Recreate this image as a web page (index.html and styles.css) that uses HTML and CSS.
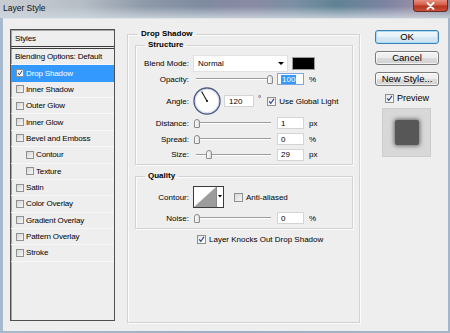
FILE: index.html
```html
<!DOCTYPE html>
<html>
<head>
<meta charset="utf-8">
<title>Layer Style</title>
<link rel="stylesheet" href="styles.css">
</head>
<body>
<div class="window">
  <div class="titlebar">
    <span class="title">Layer Style</span>
    <div class="close"><svg width="11" height="8" viewBox="0 0 11 8"><path d="M2.5 1 L8.5 7 M8.5 1 L2.5 7" stroke="#fff" stroke-width="1.8" stroke-linecap="round"/></svg></div>
  </div>
  <div class="client">
    <div class="styles-list">
      <div class="list-head">Styles</div>
      <div class="item">Blending Options: Default</div>
      <div class="item selected"><span class="cb small checked"><svg viewBox="0 0 8 8"><path d="M1.5 4 L3.3 6.3 L6.8 1" fill="none" stroke="#1f3a8a" stroke-width="1.3"/></svg></span>Drop Shadow</div>
      <div class="item"><span class="cb small"></span>Inner Shadow</div>
      <div class="item"><span class="cb small"></span>Outer Glow</div>
      <div class="item"><span class="cb small"></span>Inner Glow</div>
      <div class="item"><span class="cb small"></span>Bevel and Emboss</div>
      <div class="item sub"><span class="cb small"></span>Contour</div>
      <div class="item sub"><span class="cb small"></span>Texture</div>
      <div class="item"><span class="cb small"></span>Satin</div>
      <div class="item"><span class="cb small"></span>Color Overlay</div>
      <div class="item"><span class="cb small"></span>Gradient Overlay</div>
      <div class="item"><span class="cb small"></span>Pattern Overlay</div>
      <div class="item"><span class="cb small"></span>Stroke</div>
    </div>

    <fieldset class="group main">
      <legend>Drop Shadow</legend>
      <fieldset class="group sub-group structure">
        <legend>Structure</legend>
        <div class="row r-blend">
          <span class="lbl">Blend Mode:</span>
          <div class="select"><span>Normal</span><i class="caret"></i></div>
          <span class="swatch"></span>
        </div>
        <div class="row r-opacity">
          <span class="lbl">Opacity:</span>
          <div class="slider"><span class="thumb" style="margin-left:74px"></span></div>
          <span class="num focus"><span class="hl">100</span></span>
          <span class="unit">%</span>
        </div>
        <div class="row r-angle">
          <span class="lbl">Angle:</span>
          <svg class="dial" width="28" height="28" viewBox="0 0 28 28">
            <circle cx="14" cy="14" r="13" fill="#fff" stroke="#4a5b82" stroke-width="1.4"/>
            <circle cx="14" cy="14" r="11.8" fill="none" stroke="#c9d0de" stroke-width="0.8"/>
            <path d="M14 14 L8.6 4.6" stroke="#111" stroke-width="1.1"/>
            <circle cx="14" cy="14" r="1.1" fill="#111"/>
          </svg>
          <span class="num wide">120</span>
          <span class="deg">°</span>
          <span class="cb checked"><svg viewBox="0 0 9 9"><path d="M1.6 4.4 L3.6 7 L7.6 1.2" fill="none" stroke="#1f3a8a" stroke-width="1.4"/></svg></span>
          <span class="cb-text">Use Global Light</span>
        </div>
        <div class="row r-dist">
          <span class="lbl">Distance:</span>
          <div class="slider"><span class="thumb" style="margin-left:1px"></span></div>
          <span class="num">1</span>
          <span class="unit">px</span>
        </div>
        <div class="row r-spread">
          <span class="lbl">Spread:</span>
          <div class="slider"><span class="thumb" style="margin-left:1px"></span></div>
          <span class="num">0</span>
          <span class="unit">%</span>
        </div>
        <div class="row r-size">
          <span class="lbl">Size:</span>
          <div class="slider"><span class="thumb" style="margin-left:13px"></span></div>
          <span class="num">29</span>
          <span class="unit">px</span>
        </div>
      </fieldset>

      <fieldset class="group sub-group quality">
        <legend>Quality</legend>
        <div class="row r-contour">
          <span class="lbl">Contour:</span>
          <svg class="contour" width="31" height="22" viewBox="0 0 31 22">
            <rect x="0.5" y="0.5" width="30" height="21" fill="#fff" stroke="#3a3a3a"/>
            <polygon points="1,21 23,1 23,21" fill="#9c9c9c"/>
            <path d="M23.5 1 V21" stroke="#8a8a8a"/>
            <polygon points="25,9 29,9 27,11.5" fill="#000"/>
          </svg>
          <span class="cb aa"></span>
          <span class="cb-text">Anti-aliased</span>
        </div>
        <div class="row r-noise">
          <span class="lbl">Noise:</span>
          <div class="slider"><span class="thumb" style="margin-left:1px"></span></div>
          <span class="num">0</span>
          <span class="unit">%</span>
        </div>
      </fieldset>

      <div class="row r-knock">
        <span class="cb checked"><svg viewBox="0 0 9 9"><path d="M1.6 4.4 L3.6 7 L7.6 1.2" fill="none" stroke="#1f3a8a" stroke-width="1.4"/></svg></span>
        <span class="cb-text">Layer Knocks Out Drop Shadow</span>
      </div>
    </fieldset>

    <div class="side">
      <div class="btn default">OK</div>
      <div class="btn">Cancel</div>
      <div class="btn">New Style...</div>
      <div class="preview-row">
        <span class="cb checked"><svg viewBox="0 0 9 9"><path d="M1.6 4.4 L3.6 7 L7.6 1.2" fill="none" stroke="#1f3a8a" stroke-width="1.4"/></svg></span>
        <span class="preview-text">Preview</span>
      </div>
      <div class="preview-box"><div class="preview-square"></div></div>
    </div>
  </div>
</div>
</body>
</html>
```

FILE: styles.css
```css
* { box-sizing: border-box; }
html, body { margin: 0; padding: 0; }
body {
  width: 450px;
  height: 333px;
  overflow: hidden;
  font-family: "Liberation Sans", Arial, sans-serif;
  font-size: 8px;
  color: #000;
  background: #9fb3c7;
}
.window {
  width: 450px;
  height: 333px;
  display: flex;
  flex-direction: column;
  background: linear-gradient(to right, #a7bacd, #9cb0c5 50%, #a4b6c9);
}
.titlebar {
  height: 18px;
  flex: none;
  display: flex;
  align-items: flex-start;
  background:
    linear-gradient(to bottom, rgba(214,222,230,0) 35%, rgba(206,214,222,0.85) 100%),
    linear-gradient(to right, #c9cdd2 0%, #b6bec6 18%, #8e9aa9 32%, #7e8ba0 45%, #8a8aa4 55%, #7c90a4 65%, #5f8394 75%, #7e84a2 86%, #9a8fa6 93%, #7c8a9c 100%);
}
.title {
  font-size: 8.5px;
  color: #111;
  margin: 3px 0 0 3px;
}
.close {
  margin-left: auto;
  margin-right: 2px;
  width: 35px;
  height: 12px;
  border: 1px solid #6e2a22;
  border-top: none;
  border-radius: 0 0 4px 4px;
  background: linear-gradient(to bottom, #e5907f 0%, #d45d49 45%, #b8341f 55%, #c8503b 100%);
  display: flex;
  align-items: center;
  justify-content: center;
}
.close svg { display: block; }

.client {
  flex: 1;
  margin: 0 2px 2px 3px;
  background: #eeeeee;
  display: flex;
  align-items: flex-start;
  border-top: 1px solid #dfe4ea;
}

/* styles list */
.styles-list {
  width: 105px;
  height: 292px;
  margin: 10px 0 0 7px;
  background: #eeeeee;
  border: 1px solid #505050;
  box-shadow: inset 1px 1px 0 #a5a5a5;
  flex: none;
  letter-spacing: -0.15px;
}
.list-head {
  height: 19px;
  border-bottom: 3px double #3d3d3d;
  padding-left: 4px;
  display: flex;
  align-items: center;
}
.item {
  height: 16.36px;
  border-bottom: 1px solid #f8f8f8;
  display: flex;
  align-items: center;
  padding-left: 4px;
  white-space: nowrap;
}
.item .cb { margin-left: 1px; }
.item.sub { padding-left: 14px; }
.item.selected {
  background: #3399ff;
  color: #fff;
  border-bottom-color: #3399ff;
}

/* checkboxes */
.cb {
  width: 9px;
  height: 9px;
  flex: none;
  border: 1px solid #8f9090;
  background: linear-gradient(135deg, #d6d6d6, #f7f7f7);
  display: inline-flex;
}
.cb.small { width: 8px; height: 8px; margin-right: 2px; }
.cb svg { width: 100%; height: 100%; display: block; }
.cb.checked { background: linear-gradient(135deg, #e6e6e6, #fdfdfd); }
.cb-text { margin-left: 3px; white-space: nowrap; }

/* groups */
.group {
  margin: 0;
  padding: 0;
  min-width: 0;
  border: 1px solid #d2d2d2;
  box-shadow: 1px 1px 0 #fbfbfb, inset 1px 1px 0 #fbfbfb;
}
.group > legend {
  font-weight: bold;
  font-size: 8px;
  line-height: 10px;
  padding: 0 3px;
}
.main {
  width: 233px;
  height: 294px;
  margin: 10px 0 0 12px;
  padding: 0 6px 0 7px;
  flex: none;
}
.main > legend { margin-left: 3px; }
.sub-group > legend { margin-left: 9px; }
.structure {
  margin-top: 1px;
  padding: 5px 0 2px 0;
}
.quality {
  margin-top: 6px;
  padding: 5px 0 0 0;
}

.row { display: flex; align-items: center; }
.lbl {
  width: 53px;
  margin-right: 4px;
  text-align: right;
  flex: none;
  white-space: nowrap;
}
.r-blend { height: 17px; }
.r-opacity { height: 14px; }
.r-angle { height: 28px; margin-top: 1px; }
.r-dist { height: 16px; }
.r-spread { height: 16px; }
.r-size { height: 15px; }
.r-contour { height: 22px; }
.r-noise { height: 20px; }
.r-knock { height: 12px; margin: 4px 0 0 62px; }

.select {
  width: 95px;
  height: 17px;
  background: #fff;
  border: 1px solid #e2e2e2;
  display: flex;
  align-items: center;
  padding-left: 4px;
}
.caret {
  margin-left: auto;
  margin-right: 3px;
  width: 0;
  height: 0;
  border-left: 3px solid transparent;
  border-right: 3px solid transparent;
  border-top: 3px solid #000;
}
.swatch {
  width: 23px;
  height: 13px;
  margin-left: 4px;
  background: #000;
  border: 1px solid #9a9a9a;
}

.slider {
  width: 80px;
  height: 10px;
  display: flex;
  align-items: center;
  margin-right: 4px;
  flex: none;
  background:
    linear-gradient(#9c9c9c, #9c9c9c) 3px 4px / 75px 1px no-repeat,
    linear-gradient(#ffffff, #ffffff) 3px 5px / 75px 1px no-repeat;
}
.thumb {
  width: 6px;
  height: 9px;
  border: 1px solid #8a8a8a;
  border-radius: 3px 3px 1px 1px;
  background: linear-gradient(to right, #ffffff, #dedede);
  flex: none;
}
.num {
  width: 27px;
  height: 12px;
  background: #fff;
  border: 1px solid #d4d4d4;
  padding-left: 3px;
  display: flex;
  align-items: center;
  flex: none;
}
.num.focus { border-color: #7fa6d6; }
.num.wide { width: 30px; margin-left: 3px; padding-left: 4px; }
.hl { background: #3399ff; color: #fff; padding: 0 1px; line-height: 9px; }
.unit { margin-left: 5px; }
.deg { margin-left: 4px; margin-top: -6px; }
.r-angle .cb { margin-left: 6px; }
.dial { display: block; flex: none; }
.contour { display: block; flex: none; }
.aa { margin-left: 10px; }

/* side */
.side {
  width: 64px;
  margin: 11px 0 0 15px;
  flex: none;
  display: flex;
  flex-direction: column;
}
.btn {
  height: 14px;
  margin-bottom: 7px;
  border: 1px solid #7a7a7a;
  border-radius: 3px;
  background: linear-gradient(to bottom, #f4f4f4 0%, #ececec 48%, #dcdcdc 52%, #d0d0d0 100%);
  box-shadow: inset 0 0 0 1px rgba(255,255,255,0.7);
  font-size: 9.5px;
  display: flex;
  align-items: center;
  justify-content: center;
  line-height: 1;
}
.btn.default {
  border-color: #3c7fb1;
  box-shadow: inset 0 0 0 1px #a6dcf7;
  background: linear-gradient(to bottom, #f2f8fc 0%, #e5f0f8 48%, #d7e7f3 52%, #cfe0ee 100%);
}
.preview-row {
  display: flex;
  align-items: center;
  height: 10px;
  margin: 0 0 0 10px;
}
.preview-row .cb { width: 9px; height: 9px; }
.preview-text { font-size: 9px; margin-left: 3px; }
.preview-box {
  width: 49px;
  height: 49px;
  margin: 5px 0 0 7px;
  background: #d8d8d8;
  border: 1px solid #cdcdcd;
  display: flex;
  align-items: center;
  justify-content: center;
}
.preview-square {
  width: 24px;
  height: 25px;
  background: #575757;
  border-radius: 2px;
  box-shadow: 0 0 4px 1px #6a6a6a;
}
```
